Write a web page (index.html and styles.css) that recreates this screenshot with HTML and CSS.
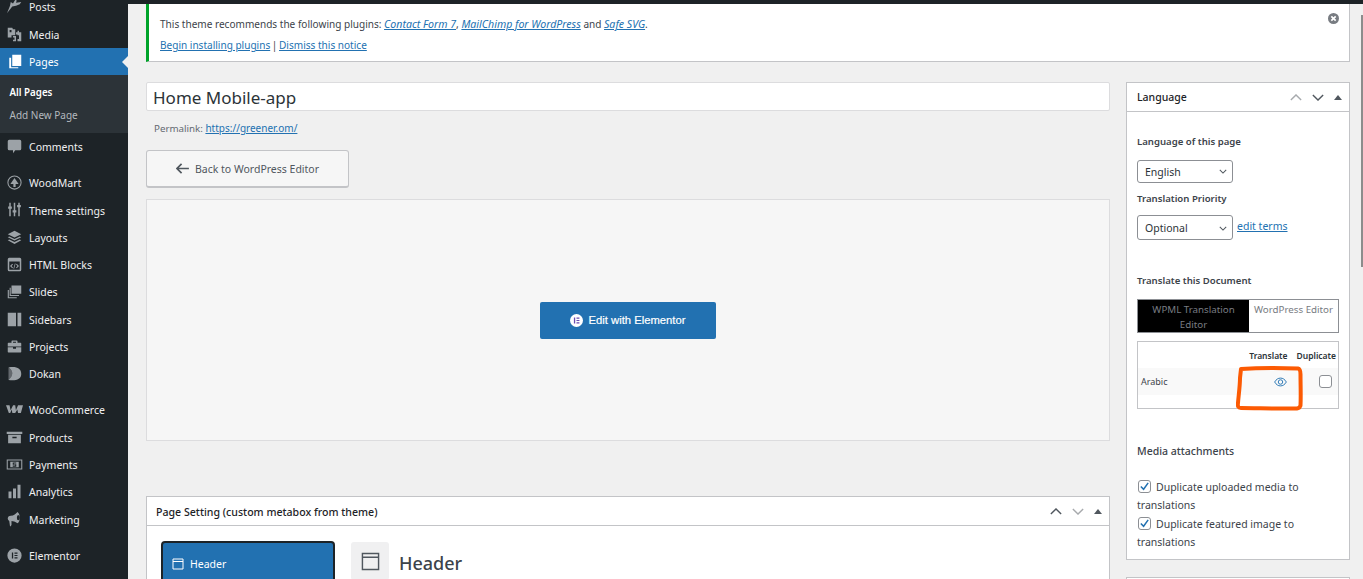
FILE: index.html
```html
<!DOCTYPE html>
<html lang="en">
<head>
    <meta charset="UTF-8" />
    <title>Edit Page</title>
    <link rel="stylesheet" href="styles.css">
</head>
<body>
  <aside class="sidebar">
    <ul class="menu">
      <li class="item"><svg class="ico" viewBox="0 0 20 20"><path d="M11 1l2 1-1 3 7-1-2 3-5 2-5 1-7 9 4-10 1-5 3 2z"/></svg>Posts</li>
      <li class="item"><svg class="ico" viewBox="0 0 20 20"><path fill-rule="evenodd" d="M1 1h6l1 2h3v8H6v3H1zM3.500 4v3h2.500V4zM12 7h2V5h2v2h3v12h-5v-3h2v-5h-2v-1h-2zM8 12h4v7H8v-2h2v-3H8z"/></svg>Media</li>
      <li class="item item-on"><svg class="ico" viewBox="0 0 20 20"><path d="M7 1h12v15H7zM3 5h2.500v12.500H15V19H3z"/></svg>Pages</li>
      <li class="sub sub-first">All Pages</li>
      <li class="sub sub-last">Add New Page</li>
      <li class="item"><svg class="ico" viewBox="0 0 20 20"><path d="M3 1h14a2 2 0 0 1 2 2v10a2 2 0 0 1-2 2h-6l-3 4v-4H3a2 2 0 0 1-2-2V3a2 2 0 0 1 2-2z"/></svg>Comments</li>
      <li class="item gap"><svg class="ico" viewBox="0 0 20 20"><path fill-rule="evenodd" d="M10 .5a9.500 9.500 0 1 1 0 19 9.500 9.500 0 0 1 0-19zm0 1.400a8.100 8.100 0 1 0 0 16.200 8.100 8.100 0 0 0 0-16.200zM10 4l5.500 8h-4v4h-3v-4h-4z"/></svg>WoodMart</li>
      <li class="item"><svg class="ico" viewBox="0 0 20 20"><path d="M3 1h2v5h1.500v3H5v10H3V9H1.500V6H3zM9 1h2v10h1.500v3H11v5H9v-5H7.500v-3H9zM15 1h2v3h1.500v3H17v12h-2V7h-1.500V4H15z"/></svg>Theme settings</li>
      <li class="item"><svg class="ico" viewBox="0 0 20 20"><path d="M10 1l9 4.500-9 4.500-9-4.500zM3 8.500l7 3.500 7-3.500 2 1-9 4.500-9-4.500zM3 12.500l7 3.500 7-3.500 2 1-9 5-9-5z"/></svg>Layouts</li>
      <li class="item"><svg class="ico" viewBox="0 0 20 20"><path fill-rule="evenodd" d="M3 1h14a2 2 0 0 1 2 2v14a2 2 0 0 1-2 2H3a2 2 0 0 1-2-2V3a2 2 0 0 1 2-2zM3 6v11h14V6zM7 9l1 1-2 2 2 2-1 1-3-3zM13 9l3 3-3 3-1-1 2-2-2-2zM10.500 8.500h1l-2 7h-1z"/></svg>HTML Blocks</li>
      <li class="item"><svg class="ico" viewBox="0 0 20 20"><path d="M6 2h13v11H6zM3.500 5H5v9.500h11V16H3.500zM1 8h1.500v9.500H13V19H1z"/></svg>Slides</li>
      <li class="item"><svg class="ico" viewBox="0 0 20 20"><path d="M1 1h11v18H1zM14 1h5v18h-5z"/></svg>Sidebars</li>
      <li class="item"><svg class="ico" viewBox="0 0 20 20"><path d="M7 2h6a1 1 0 0 1 1 1v2h4a1 1 0 0 1 1 1v4H1V6a1 1 0 0 1 1-1h4V3a1 1 0 0 1 1-1zm1 1.500V5h4V3.500zM1 11h7v2h4v-2h7v6a1 1 0 0 1-1 1H2a1 1 0 0 1-1-1z"/></svg>Projects</li>
      <li class="item"><svg class="ico" viewBox="0 0 20 20"><path d="M2 2c10-2 17 1 17 8.500S11 20 2 18.500c3-3 5-6 5-9S5 4 2 2z"/><path opacity=".55" d="M2 2c3 2 5 4.500 5 7.500s-2 6-5 9z"/></svg>Dokan</li>
      <li class="item gap"><svg class="ico ico-wide" viewBox="0 0 24 16"><path d="M0 2h5l1.500 7L10 2h3l1 7 3-7h7l-3 11h-4l-1-5-3 5h-4l-1-5-2 5H4z"/></svg>WooCommerce</li>
      <li class="item"><svg class="ico ico-wide" viewBox="0 0 24 20"><path d="M1 2h22v3H1zM3 6h18v12H3zM9 9v2h6V9z"/></svg>Products</li>
      <li class="item"><svg class="ico ico-wide" viewBox="0 0 24 20"><path fill-rule="evenodd" d="M1 3h22v14H1zM2.500 4.500v11h19v-11zM6 6h12v8H6zM9.500 7v3.500h3.500v1H9.500V13H14.500V9.500H11v-1h3.500V7z"/></svg>Payments</li>
      <li class="item"><svg class="ico" viewBox="0 0 20 20"><path d="M2 10h4v9H2zM8 6h4v13H8zM14 1h4v18h-4z"/></svg>Analytics</li>
      <li class="item"><svg class="ico" viewBox="0 0 20 20"><path fill-rule="evenodd" d="M14 0a4.500 8 0 0 1 0 15c-3-2-6-3-8-3v5l-1 2H4l-1-7a4 4 0 0 1-2-3 4 4 0 0 1 4-4c4 0 7-3 9-5zm1 4a1.800 3.500 0 0 0 0 7 1.800 3.500 0 0 0 0-7z"/></svg>Marketing</li>
      <li class="item gap"><svg class="ico" viewBox="0 0 20 20"><path fill-rule="evenodd" d="M10 .5a9.500 9.500 0 1 1 0 19 9.500 9.500 0 0 1 0-19zM6.500 6v8H8.200V6zM10 6v1.600h4V6zM10 9.200v1.600h4V9.200zM10 12.400V14h4v-1.600z"/></svg>Elementor</li>
    </ul>
  </aside>

  <main class="content">
    <div class="notice">
      <div class="notice-text">
        <p>This theme recommends the following plugins: <a href="#"><em>Contact Form 7</em></a>, <a href="#"><em>MailChimp for WordPress</em></a> and <a href="#"><em>Safe SVG</em></a>.</p>
        <p class="notice-links"><a href="#">Begin installing plugins</a> <span class="sep">|</span> <a href="#">Dismiss this notice</a></p>
      </div>
      <svg class="notice-close" viewBox="0 0 20 20"><circle cx="10" cy="10" r="10" fill="#787c82"/><path d="M6 6l8 8M14 6l-8 8" stroke="#fff" stroke-width="3"/></svg>
    </div>

    <div class="columns">
      <div class="col-main">
        <div class="title-input">Home Mobile-app</div>
        <div class="permalink">Permalink: <a href="#">https://greener.om/</a></div>
        <div class="back-btn">
          <svg class="back-arrow" viewBox="0 0 14 12"><path d="M6 1L1 6l5 5M1 6h13" fill="none" stroke="#50575e" stroke-width="1.800"/></svg>
          Back to WordPress Editor
        </div>
        <div class="editor-box">
          <div class="elementor-btn">
            <svg class="elementor-ico" viewBox="0 0 20 20"><circle cx="10" cy="10" r="10" fill="#fff"/><path d="M6 5.500h2v9H6zM10 5.500h4.500v1.800H10zM10 9.100h4.500v1.800H10zM10 12.700h4.500v1.800H10z" fill="#6a4bb0"/></svg>
            Edit with Elementor
          </div>
        </div>

        <section class="box box-page">
          <div class="box-head">
            <h2>Page Setting (custom metabox from theme)</h2>
            <div class="box-tools">
              <svg class="chev" viewBox="0 0 14 8"><path d="M1 7l6-6 6 6" fill="none" stroke="#50575e" stroke-width="1.600"/></svg>
              <svg class="chev" viewBox="0 0 14 8"><path d="M1 1l6 6 6-6" fill="none" stroke="#a7aaad" stroke-width="1.600"/></svg>
              <span class="tri"></span>
            </div>
          </div>
          <div class="page-set">
            <div class="set-tab">
              <svg class="win win-small" viewBox="0 0 12 12"><path d="M1 1h10v10H1zM1 3.500h10" fill="none" stroke="#fff" stroke-width="1"/></svg>
              Header
            </div>
            <div class="set-title">
              <div class="set-ico"><svg class="win win-big" viewBox="0 0 20 20"><path d="M1.500 1.500h17v17h-17zM1.500 5.500h17" fill="none" stroke="#50575e" stroke-width="1.500"/></svg></div>
              <h3>Header</h3>
            </div>
          </div>
        </section>
      </div>

      <div class="col-side">
        <section class="box box-lang">
          <div class="box-head">
            <h2>Language</h2>
            <div class="box-tools">
              <svg class="chev" viewBox="0 0 14 8"><path d="M1 7l6-6 6 6" fill="none" stroke="#a7aaad" stroke-width="1.600"/></svg>
              <svg class="chev" viewBox="0 0 14 8"><path d="M1 1l6 6 6-6" fill="none" stroke="#50575e" stroke-width="1.600"/></svg>
              <span class="tri"></span>
            </div>
          </div>
          <div class="lang-body">
            <div class="label label-first">Language of this page</div>
            <div class="select select-lang">English<svg class="sel-arrow" viewBox="0 0 10 6"><path d="M1 1l4 4 4-4" fill="none" stroke="#50575e" stroke-width="1.300"/></svg></div>
            <div class="label label-priority">Translation Priority</div>
            <div class="priority-row">
              <div class="select select-prio">Optional<svg class="sel-arrow" viewBox="0 0 10 6"><path d="M1 1l4 4 4-4" fill="none" stroke="#50575e" stroke-width="1.300"/></svg></div>
              <a class="edit-terms" href="#">edit terms</a>
            </div>
            <div class="label label-doc">Translate this Document</div>
            <div class="tabs">
              <div class="tab tab-on">WPML Translation Editor</div>
              <div class="tab">WordPress Editor</div>
            </div>
            <div class="trans-table">
              <div class="trans-head"><span class="th-a">Translate</span><span class="th-b">Duplicate</span></div>
              <div class="trans-row">
                <span class="lang-name">Arabic</span>
                <svg class="eye" viewBox="0 0 14 10"><path d="M.7 5C2.500 2 4.500 .8 7 .8S11.500 2 13.300 5C11.500 8 9.500 9.200 7 9.200S2.500 8 .7 5z" fill="none" stroke="#2271b1" stroke-width="1"/><circle cx="7" cy="5" r="2.400" fill="none" stroke="#2271b1" stroke-width="1"/></svg>
                <span class="check"></span>
              </div>
            </div>
            <div class="media-title">Media attachments</div>
            <div class="media-opt"><span class="check check-on"><svg viewBox="0 0 12 12"><path d="M2 6l3 3 5-7" fill="none" stroke="#2271b1" stroke-width="1.600"/></svg></span>Duplicate uploaded media to translations</div>
            <div class="media-opt"><span class="check check-on"><svg viewBox="0 0 12 12"><path d="M2 6l3 3 5-7" fill="none" stroke="#2271b1" stroke-width="1.600"/></svg></span>Duplicate featured image to translations</div>
          </div>
        </section>
        <section class="box box-next"></section>
      </div>
    </div>
  </main>

  <!-- hand-drawn highlight on the screenshot -->
  <svg class="scribble" viewBox="0 0 68 46"><path d="M5 3C20 2 48 2 62 2.500c2.500 .5 2.500 3 2.500 6 0 10 .5 22 0 31-1 3-3 3-6 3C42 43 20 42 5 42c-3 0-3.500-2-3-5C2.500 30 4 20 4 12z" fill="none" stroke="#fc5a03" stroke-width="4" stroke-linejoin="round"/></svg>
  <div class="scrollbar"></div>
</body>
</html>
```

FILE: styles.css
```css
* {
    margin: 0;
    padding: 0;
    box-sizing: border-box;
}

html, body {
    height: 579px;
    overflow: hidden;
}

body {
    display: flex;
    background: #f0f0f0;
    color: #3c434a;
    font-family: "Noto Sans", sans-serif;
    font-size: 10px;
}

a {
    color: #2271b1;
}

/* admin menu */
.sidebar {
    width: 128px;
    flex: none;
    background: #1d2327;
    overflow: hidden;
}

.menu {
    list-style: none;
    margin-top: -6.6px;
}

.item {
    display: flex;
    align-items: center;
    height: 27.3px;
    padding: 0.8px 0 0 29px;
    position: relative;
    color: #f0f0f1;
    font-size: 10.5px;
}

.item.gap {
    margin-top: 8.8px;
}

.ico {
    position: absolute;
    left: 7px;
    top: 6px;
    width: 15px;
    height: 15px;
    fill: #9ca2a7;
}

.ico-wide {
    left: 6px;
    width: 17px;
}

.item-on {
    background: #2271b1;
    color: #fff;
}

.item-on .ico {
    fill: #fff;
}

.item-on::after {
    content: "";
    position: absolute;
    right: 0;
    top: 8px;
    border: 6px solid transparent;
    border-right-color: #f0f0f0;
    border-left-width: 0;
}

.sub {
    background: #2c3338;
    padding-left: 9.5px;
    color: #b4b9be;
    font-size: 10px;
}

.sub-first {
    height: 29px;
    line-height: 35px;
    color: #fff;
    font-weight: 600;
    font-size: 9.75px;
}

.sub-last {
    height: 28.800px;
    line-height: 23px;
}

/* content */
.content {
    flex: 1;
    border-top: 4px solid #1d2327;
    padding: 0 13px 0 18px;
    min-width: 0;
}

.notice {
    display: flex;
    justify-content: space-between;
    height: 58px;
    background: #fff;
    border: 1px solid #c3c4c7;
    border-width: 0 1px 1px 3px;
    border-left-color: #00a32a;
    padding: 14px 10px 0 11px;
    line-height: 13px;
    font-size: 10.050px;
    color: #3c434a;
}

.notice em {
    font-size: 10.6px;
}

.notice-links {
    margin-top: 8px;
}

.sep {
    margin: 0 -1px;
}

.notice-close {
    width: 11px;
    height: 11px;
    margin-top: -5px;
}

.columns {
    display: flex;
    gap: 16px;
    margin-top: 20px;
}

.col-main {
    width: 964px;
    flex: none;
}

.col-side {
    width: 224px;
    flex: none;
}

.title-input {
    height: 29px;
    background: #fff;
    border: 1px solid #dcdcde;
    border-radius: 2px;
    padding-left: 6px;
    font-size: 17px;
    line-height: 29px;
    color: #2c3338;
}

.permalink {
    margin-top: 11px;
    padding-left: 8px;
    font-size: 9.75px;
    line-height: 13px;
    color: #646970;
}

.permalink a {
    font-size: 10px;
}

.back-btn {
    display: flex;
    align-items: center;
    justify-content: center;
    gap: 6px;
    width: 203px;
    height: 38px;
    margin-top: 15px;
    background: #f6f6f6;
    border: 1px solid #c3c4c7;
    border-bottom-width: 2px;
    border-radius: 3px;
    font-size: 10.5px;
    color: #50575e;
}

.back-arrow {
    width: 13px;
    height: 11px;
}

.editor-box {
    display: flex;
    align-items: center;
    justify-content: center;
    height: 242px;
    margin-top: 11px;
    background: #f6f6f6;
    border: 1px solid #dcdcde;
}

.elementor-btn {
    display: flex;
    align-items: center;
    justify-content: center;
    gap: 6px;
    width: 176px;
    height: 37px;
    margin-right: 1px;
    background: #2271b1;
    border-radius: 2px;
    color: #fff;
    font-family: "Liberation Sans", sans-serif;
    font-size: 11.250px;
    -webkit-text-stroke: 0.2px #fff;
}

.elementor-ico {
    width: 13px;
    height: 13px;
}

/* metaboxes */
.box {
    background: #fff;
    border: 1px solid #c3c4c7;
}

.box-head {
    display: flex;
    align-items: center;
    justify-content: space-between;
    height: 29px;
    padding: 0 7px 0 10px;
    border-bottom: 1px solid #c3c4c7;
}

.box-head h2 {
    font-size: 10.5px;
    font-weight: 500;
    color: #1d2327;
}

.box-tools {
    display: flex;
    align-items: center;
    gap: 9.5px;
}

.chev {
    width: 12px;
    height: 7px;
}

.tri {
    margin-left: 1px;
    border: 4px solid transparent;
    border-top-width: 0;
    border-bottom: 5px solid #50575e;
}

/* runs on below the fold, so no bottom border shows */
.box-page {
    margin-top: 55px;
    height: 83px;
    border-bottom: 0;
    overflow: hidden;
}

.box-page .box-head {
    padding: 1px 7px 0 9px;
}

.box-page h2 {
    font-size: 10.6px;
}

.page-set {
    display: flex;
    gap: 16px;
    padding: 15px 0 0 14px;
}

.set-tab {
    display: flex;
    align-items: center;
    flex: none;
    gap: 6px;
    width: 174px;
    height: 46px;
    background: #2271b1;
    border: 2px solid #1d2327;
    border-radius: 4px;
    padding-left: 9px;
    color: #fff;
    font-size: 10.5px;
}

.win-small {
    width: 12px;
    height: 12px;
}

.set-title {
    display: flex;
    gap: 10px;
    margin-top: 1px;
}

.set-ico {
    display: flex;
    align-items: center;
    justify-content: center;
    width: 38px;
    height: 38px;
    background: #f0f0f1;
    border-radius: 3px;
}

.win-big {
    width: 19px;
    height: 19px;
}

.set-title h3 {
    font-size: 18px;
    font-weight: 500;
    line-height: 42px;
    color: #3c434a;
}

.box-lang {
    height: 478px;
}

.lang-body {
    padding: 0 10px;
}

.label {
    font-size: 9.6px;
    font-weight: 600;
    line-height: 13px;
    color: #3c434a;
}

.label-first {
    margin-top: 23px;
}

.label-priority {
    margin-top: 9px;
}

.label-doc {
    margin-top: 34px;
}

.select {
    display: flex;
    align-items: center;
    justify-content: space-between;
    width: 96px;
    background: #fff;
    border: 1px solid #8c8f94;
    border-radius: 3px;
    padding: 0 5px 0 7px;
    font-size: 10.5px;
    color: #2c3338;
}

.select-lang {
    height: 23px;
    margin-top: 12px;
}

.select-prio {
    height: 25px;
    padding-top: 1px;
}

.sel-arrow {
    width: 8px;
    height: 5px;
}

.priority-row {
    display: flex;
    gap: 4px;
    margin-top: 10px;
}

.edit-terms {
    font-size: 10.5px;
    line-height: 22px;
}

.tabs {
    display: flex;
    width: 202px;
    height: 34px;
    margin-top: 12px;
    border: 1px solid #8c8f94;
}

.tab {
    flex: 1;
    padding: 2px 4px;
    text-align: center;
    font-size: 9.75px;
    line-height: 15px;
    color: #787c82;
}

.tab-on {
    flex: none;
    width: 111px;
    background: #000;
}

.trans-table {
    width: 202px;
    height: 68px;
    margin-top: 8px;
    border: 1px solid #c3c4c7;
}

.trans-head {
    display: flex;
    justify-content: flex-end;
    gap: 9px;
    height: 26px;
    padding: 0 2px 0 0;
    font-size: 8.500px;
    font-weight: 600;
    line-height: 27px;
    color: #2c3338;
}

.trans-row {
    display: flex;
    align-items: center;
    height: 27px;
    background: #f9f9f9;
    padding: 0 6px 0 3px;
    font-size: 9px;
}

.lang-name {
    flex: 1;
}

.eye {
    width: 13px;
    height: 10px;
    margin-right: 32px;
}

.check {
    display: inline-block;
    width: 13px;
    height: 13px;
    background: #fff;
    border: 1px solid #8c8f94;
    border-radius: 3px;
}

.check-on {
    vertical-align: -2px;
    margin: 0 5px 0 1px;
}

.check-on svg {
    display: block;
    width: 11px;
    height: 11px;
}

.media-title {
    margin-top: 35px;
    font-size: 10.5px;
    line-height: 14px;
    font-weight: 500;
}

.media-opt {
    width: 190px;
    font-size: 10.5px;
    line-height: 18.4px;
}

.media-title + .media-opt {
    margin-top: 20px;
}

.box-next {
    margin-top: 17px;
    height: 2px;
    border-bottom: 0;
}

/* things lying over the page */
.scribble {
    position: absolute;
    left: 1236px;
    top: 366px;
    width: 68px;
    height: 46px;
}

.scrollbar {
    position: absolute;
    right: 0;
    top: 15px;
    width: 2px;
    height: 252px;
    background: #8c8c8c;
}
```
